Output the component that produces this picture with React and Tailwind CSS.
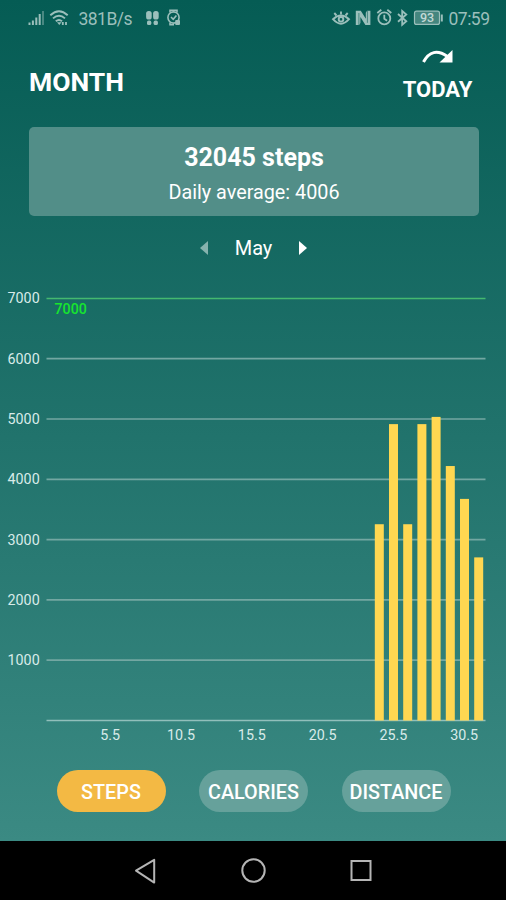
import React, { useState } from 'react';
import clsx from 'clsx';

const CHART_TOP = 280;
const BASE_Y = 720.5 - CHART_TOP;
const STEP_HEIGHT = 60.3;

const bars = [
    { day: 25, steps: 3255 },
    { day: 26, steps: 4915 },
    { day: 27, steps: 3255 },
    { day: 28, steps: 4915 },
    { day: 29, steps: 5035 },
    { day: 30, steps: 4220 },
    { day: 31, steps: 3675 },
    { day: 32, steps: 2705 },
];

const xLabels = ['5.5', '10.5', '15.5', '20.5', '25.5', '30.5'];
const tabs = ['STEPS', 'CALORIES', 'DISTANCE'];

const StatusBar = () => (
    <svg className="block w-full h-9 shrink-0 text-[#9bbfbb]" viewBox="0 0 506 36" fill="none" stroke="currentColor">
        {/* Signal */}
        <g strokeWidth="2">
            <path d="M29.5 22.5v2.5M32.9 20.5v4.5M36.3 17.5v7.5M39.7 14v11" />
            <path d="M43 11v14" opacity="0.45" />
        </g>
        {/* Wifi */}
        <g strokeWidth="1.9">
            <path d="M50.3 15.2q8.7-8 17.4 0M53 18.4q6-5.2 12 0M55.8 21.3q3.2-2.8 6.2 0" />
            <path d="M57 22.3h4.6l-2.3 2.7z" fill="currentColor" stroke="none" />
            <path d="M62.8 22v3M66 22v3" strokeWidth="1.8" />
        </g>
        <text x="78.5" y="24.5" fontSize="17.5" textLength="54" fill="currentColor" stroke="none">381B/s</text>
        {/* Footprints */}
        <g fill="currentColor" stroke="none">
            <rect x="146.1" y="11" width="5.6" height="8.6" rx="2.6" />
            <rect x="153.1" y="11" width="5.6" height="8.6" rx="2.6" />
            <rect x="147" y="20.6" width="4.3" height="4.4" rx="1.6" />
            <rect x="153.6" y="20.6" width="4.3" height="4.4" rx="1.6" />
        </g>
        {/* Watch */}
        <g strokeWidth="1.6">
            <circle cx="173.5" cy="17.5" r="5.6" />
            <path d="M170 12.5v-2.3h7v2.3M170 22.5v2.3h4M171 17l2.2 2.2 3.2-3.8" />
            <rect x="175.2" y="20" width="4.8" height="5" rx="1" fill="currentColor" stroke="none" />
        </g>
        {/* Eye */}
        <g strokeWidth="1.9">
            <path d="M333 19.2q8-7.5 16 0q-8 9-16 0z" />
            <circle cx="341" cy="19.3" r="2.3" />
            <path d="M341 14.5v-3M336.5 15.5l-2.2-2.5M345.5 15.5l2.2-2.5" />
        </g>
        {/* NFC */}
        <g fill="currentColor" stroke="none">
            <path d="M355.8 10.8h5l5 8v-6l1.2-2h3.4V25h-5l-5-8v6l-1.2 2h-3.4z" />
        </g>
        <path d="M358.9 13v12M367.4 10.8v12" stroke="#0a5f57" strokeWidth="0.6" />
        {/* Alarm */}
        <g strokeWidth="1.8">
            <circle cx="384.3" cy="18.4" r="6" />
            <path d="M384.3 14.8v4l2.8 2M377.3 13l4-3.2M391.3 13l-4-3.2" />
        </g>
        {/* Bluetooth */}
        <path d="M398 14l8.3 7.2-4.1 3.5V11l4.1 3.5-8.3 7.2" strokeWidth="1.8" />
        {/* Battery */}
        <rect x="414.5" y="11.2" width="25" height="13.2" rx="2" fill="#79a7a2" fillOpacity="0.55" strokeWidth="1.2" />
        <path d="M441.8 14.5v7" strokeWidth="2" />
        <text x="427" y="22.4" fontSize="12.5" fontWeight="500" textAnchor="middle" fill="#c3d9d6" stroke="none">93</text>
        <text x="448.5" y="24.5" fontSize="17.5" textLength="41.5" fill="currentColor" stroke="none">07:59</text>
    </svg>
);

const StepsChart = () => (
    <svg className="block w-full h-[470px] shrink-0" viewBox="0 0 506 470">
        {/* Grid lines */}
        {[0, 1, 2, 3, 4, 5, 6, 7].map((n) => {
            const y = BASE_Y - n * STEP_HEIGHT;
            return (
                <g key={n}>
                    {n < 7 && (
                        <path d={`M46.5 ${y}H485.5`} stroke={n === 0 ? '#91bfbb' : '#73a7a2'} strokeWidth="1.7" />
                    )}
                    {n > 0 && (
                        <text x="39.7" y={y + 5} fontSize="14.3" textAnchor="end" fill="#d8ebe9">{n * 1000}</text>
                    )}
                </g>
            );
        })}

        {/* Goal */}
        <path d={`M46.5 ${BASE_Y - 7 * STEP_HEIGHT}H485.5`} stroke="#44b96f" strokeWidth="1.5" />
        <text x="54.5" y="34" fontSize="14.2" fontWeight="500" fill="#17e52e">7000</text>

        {bars.map((bar, i) => {
            const height = (bar.steps / 1000) * STEP_HEIGHT;
            return (
                <rect key={bar.day} x={374.8 + i * 14.2} y={BASE_Y - height} width="9" height={height} fill="#ffd751" />
            );
        })}

        {xLabels.map((label, i) => (
            <text key={label} x={110.2 + i * 70.8} y="460" fontSize="14.3" textAnchor="middle" fill="#d8ebe9">{label}</text>
        ))}
    </svg>
);

export default function App() {
    const [activeTab, setActiveTab] = useState('STEPS');

    return (
        <div className="w-[506px] h-[900px] flex flex-col overflow-hidden bg-black text-white font-[Roboto,sans-serif]">
            <div className="h-[841px] flex flex-col bg-linear-to-b/srgb from-[#055c54] via-[#20726b] to-[#3b8a83]">
                <StatusBar />

                {/* Header */}
                <div className="h-[91px] shrink-0 flex justify-between pl-[29px] pr-[33px]">
                    <h1 className="text-[26.5px] leading-[30px] font-bold mt-[31px]">MONTH</h1>
                    <button className="flex flex-col items-center w-[71px] pt-3">
                        <svg className="w-8 h-4 shrink-0" viewBox="0 0 32 16">
                            <path d="M1.5 14Q10-2 25.5 8.5" fill="none" stroke="white" strokeWidth="3" />
                            <path d="M30.5 2V14.5H17.5z" fill="white" />
                        </svg>
                        <span className="text-[22px] leading-[26px] font-bold mt-[13px]">TODAY</span>
                    </button>
                </div>

                {/* Summary */}
                <div className="h-[89px] shrink-0 ml-[29px] mr-[27px] rounded-[5px] bg-[#528e88] text-center pt-4">
                    <p className="text-[25px] leading-[30px] font-bold">32045 steps</p>
                    <p className="text-[19.8px] leading-6 mt-2">Daily average: 4006</p>
                </div>

                {/* Month picker */}
                <div className="h-16 shrink-0 flex justify-center items-center gap-[27px] pl-px text-[20px]">
                    <svg className="w-2 h-3.5" viewBox="0 0 8 14"><path d="M8 0v14L0 7z" fill="#86b3ae" /></svg>
                    <span>May</span>
                    <svg className="w-2 h-3.5" viewBox="0 0 8 14"><path d="M0 0v14l8-7z" fill="white" /></svg>
                </div>

                <StepsChart />

                {/* Tabs */}
                <div className="flex gap-[33.5px] pl-[56.5px] pt-5">
                    {tabs.map((tab) => (
                        <button
                            key={tab}
                            onClick={() => setActiveTab(tab)}
                            className={clsx(
                                'w-[109px] h-[42px] shrink-0 rounded-full pt-[3px] text-[19.8px] font-medium whitespace-nowrap',
                                activeTab === tab ? 'bg-[#f3b944]' : 'bg-[#66a19b]'
                            )}
                        >
                            {tab}
                        </button>
                    ))}
                </div>
            </div>

            {/* Navigation bar */}
            <svg className="block w-full h-[59px] shrink-0" viewBox="0 0 506 59" fill="none" stroke="#b5b5b5" strokeWidth="2">
                <path d="M154.2 18.8v22.8L136 29.7z" strokeLinejoin="round" />
                <circle cx="253.5" cy="29.5" r="11.2" />
                <rect x="351.5" y="20" width="19" height="19" />
            </svg>
        </div>
    );
}
